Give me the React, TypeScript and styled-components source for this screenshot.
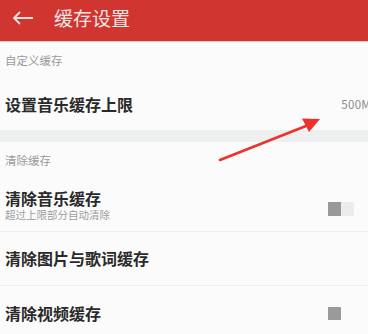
import React from 'react';
import styled, { createGlobalStyle } from 'styled-components';

const GlobalStyle = createGlobalStyle`
  html, body {
    margin: 0;
    padding: 0;
    background: #fbfbfb;
    font-family: "Noto Sans CJK SC", "Noto Sans", sans-serif;
  }
`;

type RowItem = {
  title: string;
  sub?: string;
  right?: 'value' | 'toggle' | 'check';
  value?: string;
};

const Page = styled.div`
  position: relative;
  width: 368px;
  height: 334px;
  overflow: hidden;
  background: #fbfbfb;
`;

const Header = styled.div`
  height: 42px;
  background: #d0352f;
  border-bottom: 1px solid #eec4c0;
  box-sizing: border-box;
  display: flex;
  align-items: center;
  padding-left: 12px;
  gap: 20px;
`;

const Title = styled.div`
  color: #f7e4e2;
  font-size: 19px;
  line-height: 1;
  margin-top: -6px;
`;

const BackIcon = styled.svg`
  width: 22px;
  height: 14px;
  margin-top: -6px;
`;

const SectionLabel = styled.div`
  height: 36px;
  display: flex;
  align-items: center;
  padding-left: 5px;
  font-size: 11.5px;
  color: #9a9a9a;
`;

const Band = styled.div`
  height: 12px;
  background: #eef0f0;
`;

const Row = styled.div<{ $h: number; $divider?: boolean }>`
  height: ${p => p.$h}px;
  display: flex;
  align-items: center;
  justify-content: space-between;
  padding-left: 5px;
  box-sizing: border-box;
  border-bottom: ${p => (p.$divider ? '1px solid #efefef' : 'none')};
`;

const TextCol = styled.div`
  display: flex;
  flex-direction: column;
`;

const RowTitle = styled.div`
  font-size: 16px;
  font-weight: 700;
  color: #2a2a2a;
  line-height: 19px;
`;

const RowSub = styled.div`
  font-size: 10.5px;
  color: #9c9c9c;
  line-height: 12px;
  margin-top: 1px;
`;

const Value = styled.div`
  font-size: 11.5px;
  color: #8a8a8a;
  margin-right: -3px;
  letter-spacing: 0.3px;
`;

const Toggle = styled.div`
  width: 26px;
  height: 14px;
  display: flex;
  margin-right: 14px;
  margin-top: 8px;
`;

const ToggleKnob = styled.div`
  width: 13px;
  height: 14px;
  background: #999999;
`;

const ToggleTrack = styled.div`
  width: 13px;
  height: 14px;
  background: #ececec;
`;

const Check = styled.div`
  width: 13px;
  height: 13px;
  background: #9a9a9a;
  margin-right: 27px;
`;

const Annotation = styled.svg`
  position: absolute;
  left: 0;
  top: 0;
  pointer-events: none;
`;

const group1: RowItem[] = [{ title: '设置音乐缓存上限', right: 'value', value: '500M' }];
const group2: RowItem[] = [
  { title: '清除音乐缓存', sub: '超过上限部分自动清除', right: 'toggle' },
  { title: '清除图片与歌词缓存' },
  { title: '清除视频缓存', right: 'check' },
];

const RightPart: React.FC<{ item: RowItem }> = ({ item }) => {
  if (item.right === 'value') return <Value>{item.value}</Value>;
  if (item.right === 'toggle')
    return (
      <Toggle>
        <ToggleKnob />
        <ToggleTrack />
      </Toggle>
    );
  if (item.right === 'check') return <Check />;
  return null;
};

export default function App() {
  return (
    <Page>
      <GlobalStyle />
      <Header>
        <BackIcon viewBox="0 0 22 14">
          <path d="M21 7H2M8 1L2 7l6 6" fill="none" stroke="#f5e2e0" strokeWidth="1.8" />
        </BackIcon>
        <Title>缓存设置</Title>
      </Header>
      <SectionLabel>自定义缓存</SectionLabel>
      {group1.map(item => (
        <Row key={item.title} $h={52}>
          <TextCol>
            <RowTitle>{item.title}</RowTitle>
          </TextCol>
          <RightPart item={item} />
        </Row>
      ))}
      <Band />
      <SectionLabel>清除缓存</SectionLabel>
      {group2.map((item, i) => (
        <Row key={item.title} $h={54} $divider={i < group2.length - 1}>
          <TextCol>
            <RowTitle>{item.title}</RowTitle>
            {item.sub && <RowSub>{item.sub}</RowSub>}
          </TextCol>
          <RightPart item={item} />
        </Row>
      ))}
      <Annotation width="368" height="334" viewBox="0 0 368 334">
        <path d="M220 160 L306 126" stroke="#f0302c" strokeWidth="2.6" strokeLinecap="round" />
        <path d="M320 119 L302 118.5 L309 132 Z" fill="#f0302c" />
      </Annotation>
    </Page>
  );
}
